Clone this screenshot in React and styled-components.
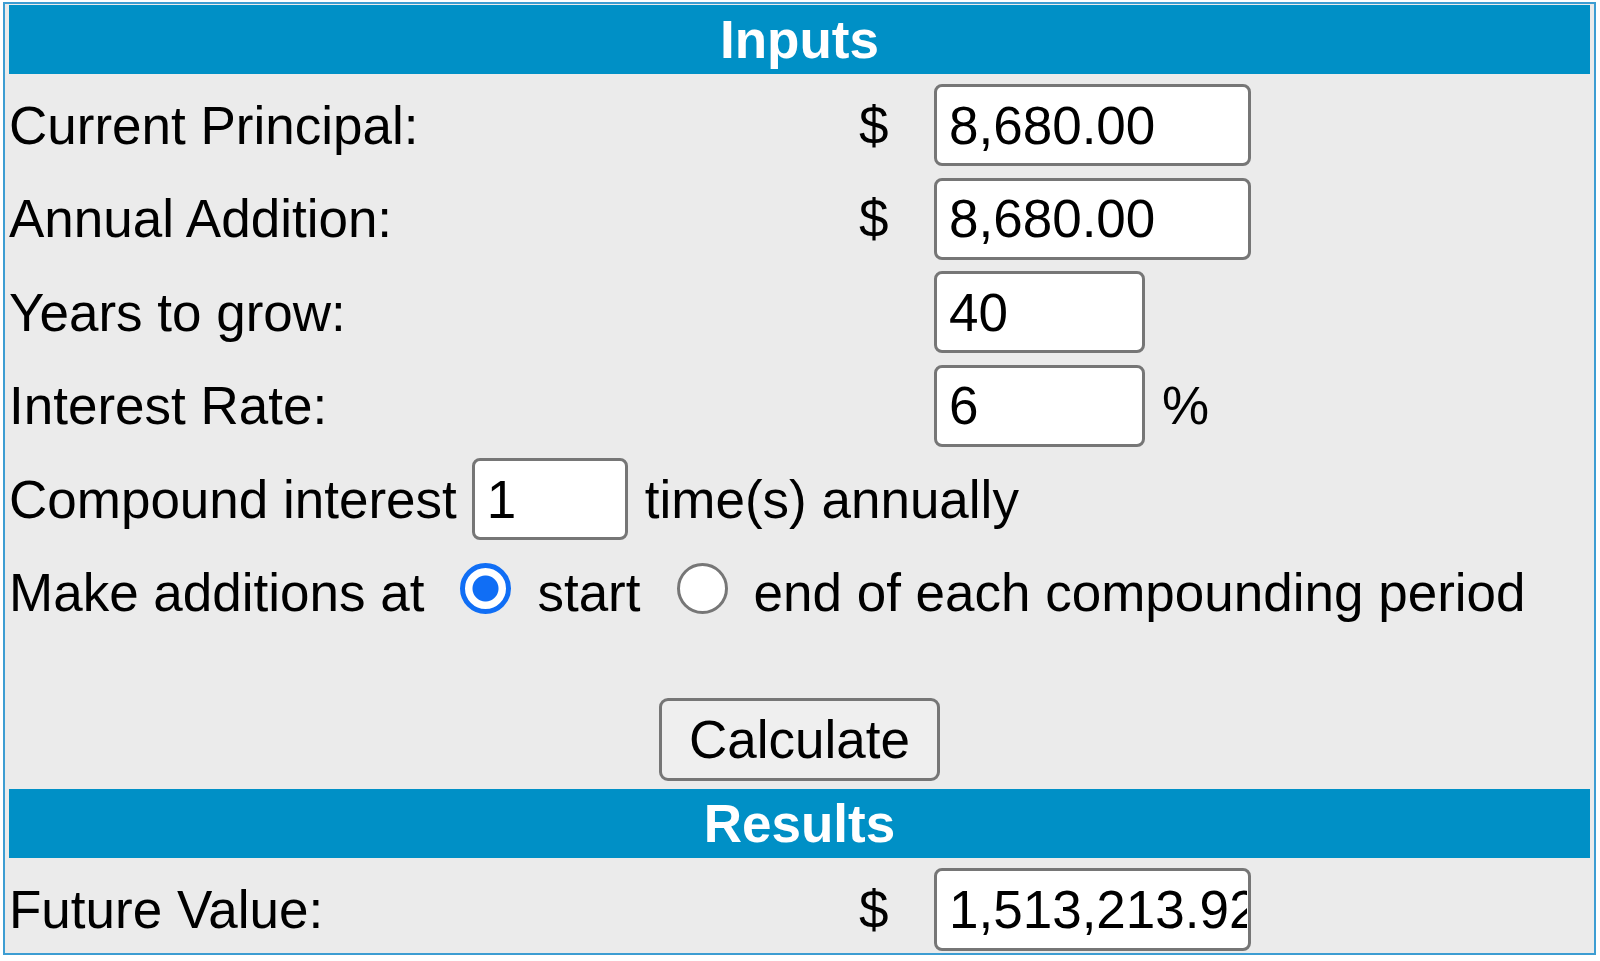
import React from 'react';
import styled, { createGlobalStyle } from 'styled-components';

const inputs = [
    { label: 'Current Principal:', currency: true, value: '8,680.00', width: 317 },
    { label: 'Annual Addition:', currency: true, value: '8,680.00', width: 317 },
    { label: 'Years to grow:', value: '40', width: 211 },
    { label: 'Interest Rate:', value: '6', width: 211, suffix: '%' }
];

const App = () => {
    return (
        <>
            <GlobalStyle />
            <Panel>
                <SectionHeader>Inputs</SectionHeader>
                <Grid>
                    {inputs.map(row => (
                        <React.Fragment key={row.label}>
                            <Label>{row.label}</Label>
                            <Currency>{row.currency ? '$' : ''}</Currency>
                            <Field>
                                <TextInput $w={row.width} defaultValue={row.value} />
                                {row.suffix && <Suffix>{row.suffix}</Suffix>}
                            </Field>
                        </React.Fragment>
                    ))}
                    <Inline>
                        <span>Compound interest</span>
                        <SmallInput $w={156} defaultValue="1" />
                        <span>time(s) annually</span>
                    </Inline>
                    <Inline>
                        <span>Make additions at</span>
                        <Radio name="when" defaultChecked />
                        <span>start</span>
                        <Radio name="when" />
                        <span>end of each compounding period</span>
                    </Inline>
                </Grid>
                <ButtonRow>
                    <Button type="button">Calculate</Button>
                </ButtonRow>
                <SectionHeader $gap>Results</SectionHeader>
                <Grid>
                    <Label>Future Value:</Label>
                    <Currency>$</Currency>
                    <Field>
                        <TextInput $w={317} $h={83} readOnly value="1,513,213.92" />
                    </Field>
                </Grid>
            </Panel>
        </>
    );
};

const GlobalStyle = createGlobalStyle`
    html, body {
        margin: 0;
        padding: 0;
        background: #fff;
    }
    body {
        font-family: "Liberation Sans", Arial, Helvetica, sans-serif;
    }
`;

const Panel = styled.div`
    margin: 2px 4px 0 3px;
    border: 2px solid #3d9dd2;
    background: #ebebeb;
    padding: 1px 4px 3px;
    font-size: 53px;
    color: #000;
`;

const SectionHeader = styled.div`
    height: 69px;
    margin-top: ${p => (p.$gap ? '8px' : '0')};
    background: #0090c6;
    color: #fff;
    font-weight: bold;
    display: flex;
    align-items: center;
    justify-content: center;
`;

const Grid = styled.div`
    display: grid;
    grid-template-columns: 848px 77px 1fr;
    grid-auto-rows: 82px;
    row-gap: 11.5px;
    align-items: center;
    padding-top: 10px;
`;

const Label = styled.div`
    white-space: nowrap;
`;

const Currency = styled.div`
    padding-left: 2px;
`;

const Field = styled.div`
    display: flex;
    align-items: center;
    gap: 17px;
`;

const Suffix = styled.span``;

const TextInput = styled.input`
    box-sizing: border-box;
    width: ${p => p.$w}px;
    height: ${p => p.$h || 82}px;
    border: 3px solid #767676;
    border-radius: 8px;
    background: #fff;
    padding: 0 1px 0 12px;
    font: inherit;
    color: #000;
    outline: none;
`;

const SmallInput = styled(TextInput)`
    margin: 0 17px 0 15px;
`;

const Inline = styled.div`
    grid-column: 1 / -1;
    display: flex;
    align-items: center;
    white-space: nowrap;
`;

const Radio = styled.input.attrs({ type: 'radio' })`
    appearance: none;
    box-sizing: border-box;
    width: 51px;
    height: 51px;
    margin: 0 26px 9px 36px;
    border-radius: 50%;
    border: 3px solid #767676;
    background: #fff;

    &:checked {
        border: 5px solid #106ef5;
        background: radial-gradient(circle, #106ef5 0 12.5px, #fff 13.5px);
    }
`;

const ButtonRow = styled.div`
    display: flex;
    justify-content: center;
    padding-top: 64.5px;
`;

const Button = styled.button`
    box-sizing: border-box;
    width: 281px;
    height: 83px;
    padding: 0;
    border: 3px solid #767676;
    border-radius: 9px;
    background: #efefef;
    font: inherit;
    color: #000;
`;

export default App;
